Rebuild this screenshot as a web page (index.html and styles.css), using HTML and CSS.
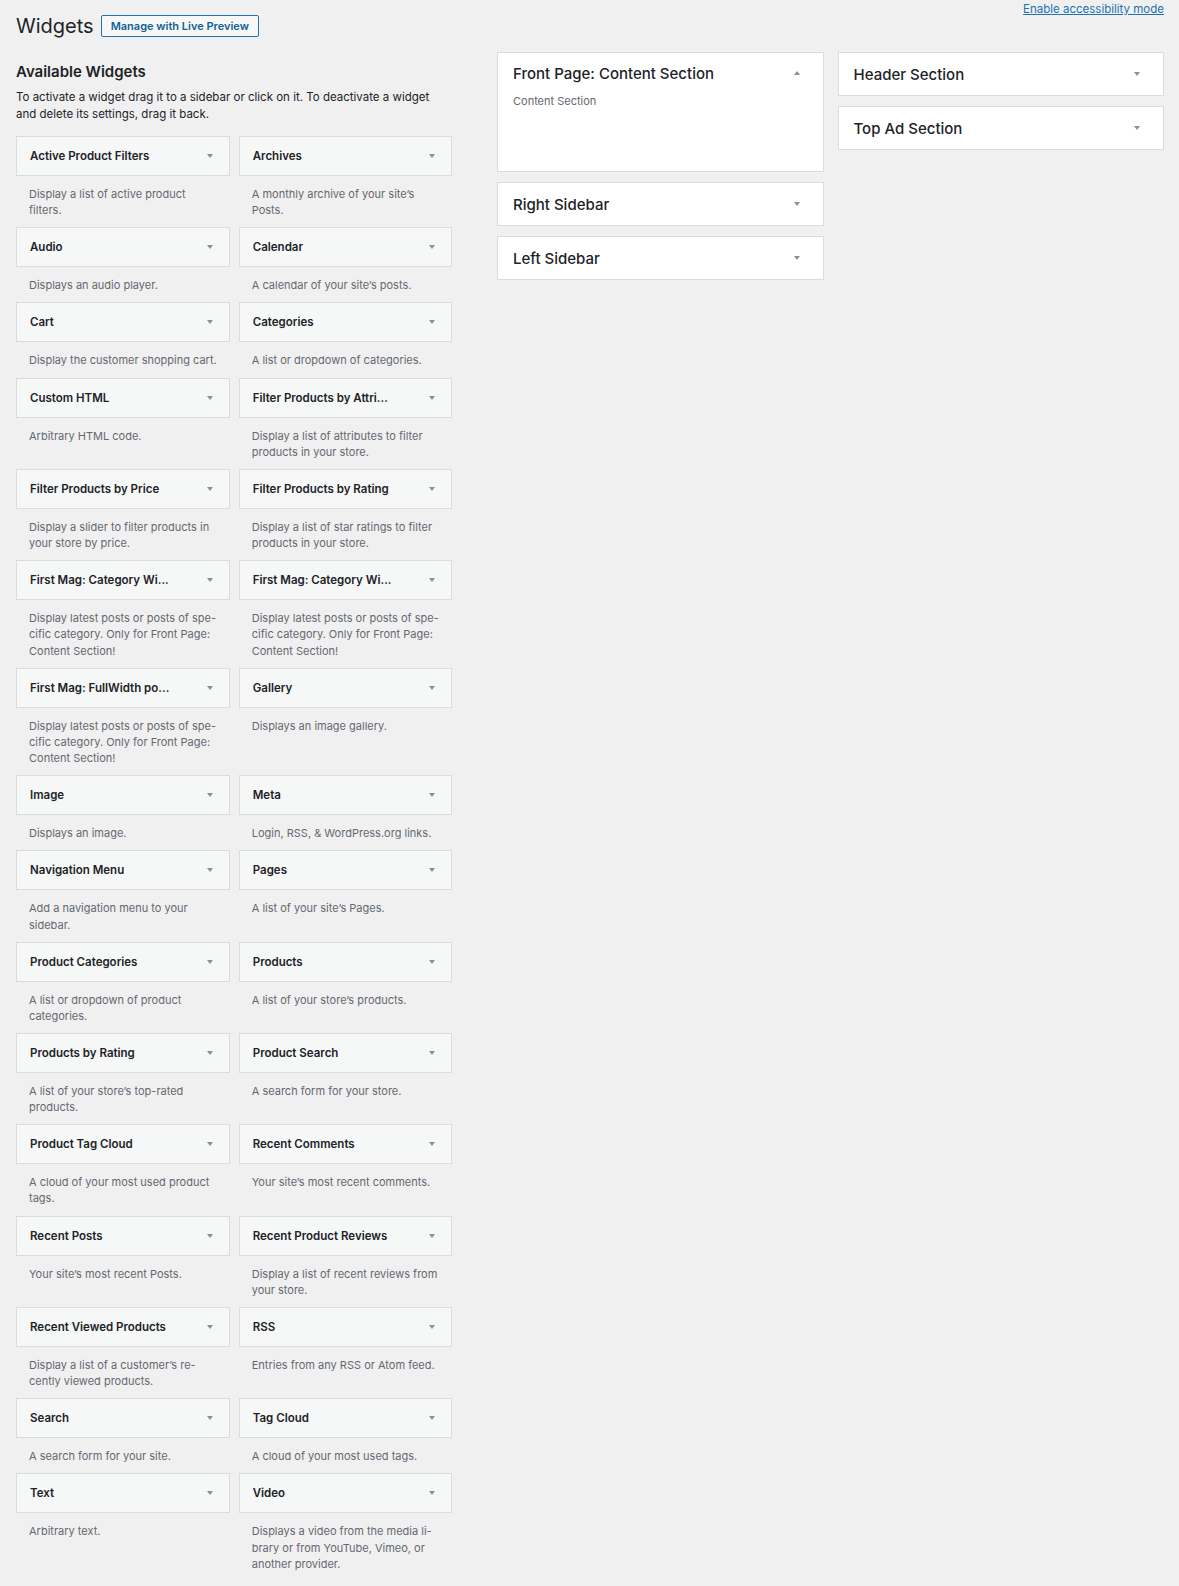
FILE: index.html
```html
<!DOCTYPE html>
<html lang="en">
<head>
  <meta charset="UTF-8" />
  <meta name="viewport" content="width=device-width, initial-scale=1" />
  <title>Widgets</title>
  <link rel="stylesheet" href="styles.css">
</head>
<body>
<div class="wrap">

  <div class="page-head">
    <div class="title-group">
      <h1>Widgets</h1>
      <a class="page-title-action" href="#">Manage with Live Preview</a>
    </div>
    <a class="a11y-link" href="#">Enable accessibility mode</a>
  </div>

  <div class="widgets-page">

    <div class="widgets-left">
      <h2>Available Widgets</h2>
      <p class="intro">To activate a widget drag it to a sidebar or click on it. To deactivate a widget<br>and delete its settings, drag it back.</p>

      <div class="widget-list">
        <div class="widget">
          <div class="widget-top"><span>Active Product Filters</span><i class="arrow"></i></div>
          <p class="widget-description">Display a list of active product<br>filters.</p>
        </div>
        <div class="widget">
          <div class="widget-top"><span>Archives</span><i class="arrow"></i></div>
          <p class="widget-description">A monthly archive of your site’s<br>Posts.</p>
        </div>

        <div class="widget">
          <div class="widget-top"><span>Audio</span><i class="arrow"></i></div>
          <p class="widget-description">Displays an audio player.</p>
        </div>
        <div class="widget">
          <div class="widget-top"><span>Calendar</span><i class="arrow"></i></div>
          <p class="widget-description">A calendar of your site’s posts.</p>
        </div>

        <div class="widget">
          <div class="widget-top"><span>Cart</span><i class="arrow"></i></div>
          <p class="widget-description">Display the customer shopping cart.</p>
        </div>
        <div class="widget">
          <div class="widget-top"><span>Categories</span><i class="arrow"></i></div>
          <p class="widget-description">A list or dropdown of categories.</p>
        </div>

        <div class="widget">
          <div class="widget-top"><span>Custom HTML</span><i class="arrow"></i></div>
          <p class="widget-description">Arbitrary HTML code.</p>
        </div>
        <div class="widget">
          <div class="widget-top"><span>Filter Products by Attri...</span><i class="arrow"></i></div>
          <p class="widget-description">Display a list of attributes to filter<br>products in your store.</p>
        </div>

        <div class="widget">
          <div class="widget-top"><span>Filter Products by Price</span><i class="arrow"></i></div>
          <p class="widget-description">Display a slider to filter products in<br>your store by price.</p>
        </div>
        <div class="widget">
          <div class="widget-top"><span>Filter Products by Rating</span><i class="arrow"></i></div>
          <p class="widget-description">Display a list of star ratings to filter<br>products in your store.</p>
        </div>

        <div class="widget">
          <div class="widget-top"><span>First Mag: Category Wi...</span><i class="arrow"></i></div>
          <p class="widget-description">Display latest posts or posts of spe-<br>cific category. Only for Front Page:<br>Content Section!</p>
        </div>
        <div class="widget">
          <div class="widget-top"><span>First Mag: Category Wi...</span><i class="arrow"></i></div>
          <p class="widget-description">Display latest posts or posts of spe-<br>cific category. Only for Front Page:<br>Content Section!</p>
        </div>

        <div class="widget">
          <div class="widget-top"><span>First Mag: FullWidth po...</span><i class="arrow"></i></div>
          <p class="widget-description">Display latest posts or posts of spe-<br>cific category. Only for Front Page:<br>Content Section!</p>
        </div>
        <div class="widget">
          <div class="widget-top"><span>Gallery</span><i class="arrow"></i></div>
          <p class="widget-description">Displays an image gallery.</p>
        </div>

        <div class="widget">
          <div class="widget-top"><span>Image</span><i class="arrow"></i></div>
          <p class="widget-description">Displays an image.</p>
        </div>
        <div class="widget">
          <div class="widget-top"><span>Meta</span><i class="arrow"></i></div>
          <p class="widget-description">Login, RSS, &amp; WordPress.org links.</p>
        </div>

        <div class="widget">
          <div class="widget-top"><span>Navigation Menu</span><i class="arrow"></i></div>
          <p class="widget-description">Add a navigation menu to your<br>sidebar.</p>
        </div>
        <div class="widget">
          <div class="widget-top"><span>Pages</span><i class="arrow"></i></div>
          <p class="widget-description">A list of your site’s Pages.</p>
        </div>

        <div class="widget">
          <div class="widget-top"><span>Product Categories</span><i class="arrow"></i></div>
          <p class="widget-description">A list or dropdown of product<br>categories.</p>
        </div>
        <div class="widget">
          <div class="widget-top"><span>Products</span><i class="arrow"></i></div>
          <p class="widget-description">A list of your store’s products.</p>
        </div>

        <div class="widget">
          <div class="widget-top"><span>Products by Rating</span><i class="arrow"></i></div>
          <p class="widget-description">A list of your store’s top-rated<br>products.</p>
        </div>
        <div class="widget">
          <div class="widget-top"><span>Product Search</span><i class="arrow"></i></div>
          <p class="widget-description">A search form for your store.</p>
        </div>

        <div class="widget">
          <div class="widget-top"><span>Product Tag Cloud</span><i class="arrow"></i></div>
          <p class="widget-description">A cloud of your most used product<br>tags.</p>
        </div>
        <div class="widget">
          <div class="widget-top"><span>Recent Comments</span><i class="arrow"></i></div>
          <p class="widget-description">Your site’s most recent comments.</p>
        </div>

        <div class="widget">
          <div class="widget-top"><span>Recent Posts</span><i class="arrow"></i></div>
          <p class="widget-description">Your site’s most recent Posts.</p>
        </div>
        <div class="widget">
          <div class="widget-top"><span>Recent Product Reviews</span><i class="arrow"></i></div>
          <p class="widget-description">Display a list of recent reviews from<br>your store.</p>
        </div>

        <div class="widget">
          <div class="widget-top"><span>Recent Viewed Products</span><i class="arrow"></i></div>
          <p class="widget-description">Display a list of a customer’s re-<br>cently viewed products.</p>
        </div>
        <div class="widget">
          <div class="widget-top"><span>RSS</span><i class="arrow"></i></div>
          <p class="widget-description">Entries from any RSS or Atom feed.</p>
        </div>

        <div class="widget">
          <div class="widget-top"><span>Search</span><i class="arrow"></i></div>
          <p class="widget-description">A search form for your site.</p>
        </div>
        <div class="widget">
          <div class="widget-top"><span>Tag Cloud</span><i class="arrow"></i></div>
          <p class="widget-description">A cloud of your most used tags.</p>
        </div>

        <div class="widget">
          <div class="widget-top"><span>Text</span><i class="arrow"></i></div>
          <p class="widget-description">Arbitrary text.</p>
        </div>
        <div class="widget">
          <div class="widget-top"><span>Video</span><i class="arrow"></i></div>
          <p class="widget-description">Displays a video from the media li-<br>brary or from YouTube, Vimeo, or<br>another provider.</p>
        </div>
      </div>
    </div>

    <div class="sidebars">
      <div class="sidebar-col">
        <div class="sidebar open">
          <div class="sidebar-name"><h2>Front Page: Content Section</h2><i class="arrow up"></i></div>
          <p class="sidebar-description">Content Section</p>
          <div class="sidebar-drop"></div>
        </div>
        <div class="sidebar">
          <div class="sidebar-name"><h2>Right Sidebar</h2><i class="arrow"></i></div>
        </div>
        <div class="sidebar">
          <div class="sidebar-name"><h2>Left Sidebar</h2><i class="arrow"></i></div>
        </div>
      </div>
      <div class="sidebar-col">
        <div class="sidebar">
          <div class="sidebar-name"><h2>Header Section</h2><i class="arrow"></i></div>
        </div>
        <div class="sidebar">
          <div class="sidebar-name"><h2>Top Ad Section</h2><i class="arrow"></i></div>
        </div>
      </div>
    </div>

  </div>
</div>
</body>
</html>
```

FILE: styles.css
```css
body {
  margin: 0;
  background: #f0f0f1;
  color: #1d2327;
  font-family: Inter, "Noto Sans", sans-serif;
}
.wrap {
  padding: 0 15px 0 16px;
}
.page-head {
  display: flex;
  justify-content: space-between;
  align-items: flex-start;
}
.title-group {
  display: flex;
  align-items: center;
  gap: 7px;
  margin-top: 15px;
  height: 22px;
}
h1 {
  margin: 0;
  font-size: 20px;
  font-weight: 400;
  line-height: 22px;
}
.page-title-action {
  border: 1px solid #2271b1;
  border-radius: 2px;
  background: #f6f7f7;
  color: #135e96;
  font-size: 11px;
  font-weight: 600;
  line-height: 20px;
  padding: 0 9px;
  text-decoration: none;
}
.a11y-link {
  color: #2271b1;
  font-size: 11.5px;
  line-height: 18px;
}
.widgets-page {
  display: flex;
  margin-top: 15px;
}
.widgets-left {
  width: 436px;
  flex: none;
}
.widgets-left h2 {
  margin: 10px 0 0;
  font-size: 15px;
  font-weight: 600;
  line-height: 20px;
}
.intro {
  margin: 7px 0 0;
  font-size: 11.5px;
  line-height: 17px;
}
.widget-list {
  display: grid;
  grid-template-columns: 1fr 1fr;
  column-gap: 9px;
  margin-top: 13px;
}
.widget-top {
  height: 38px;
  border: 1px solid #dcdcde;
  background: #f6f7f7;
  display: flex;
  align-items: center;
  justify-content: space-between;
  padding: 0 16px 0 13px;
  font-size: 11.5px;
  font-weight: 600;
}
.widget-description {
  margin: 0;
  padding: 10px 13px 9px;
  font-size: 11px;
  line-height: 16.15px;
  color: #646970;
  white-space: nowrap;
}
.arrow {
  width: 0;
  height: 0;
  border-left: 3px solid transparent;
  border-right: 3px solid transparent;
  border-top: 4px solid #8c8f94;
}
.arrow.up {
  border-top: 0;
  border-bottom: 4px solid #8c8f94;
}
.sidebars {
  flex: 1;
  margin-left: 45px;
  display: flex;
  gap: 14px;
  align-items: flex-start;
}
.sidebar-col {
  flex: 1;
  display: flex;
  flex-direction: column;
  gap: 10px;
}
.sidebar {
  background: #fff;
  border: 1px solid #dcdcde;
}
.sidebar-name {
  height: 42px;
  display: flex;
  align-items: center;
  justify-content: space-between;
  padding: 0 23px 0 15px;
}
.sidebar.open .sidebar-name {
  height: 40px;
}
.sidebar-name h2 {
  margin: 0;
  font-size: 15px;
  font-weight: 500;
}
.sidebar-description {
  margin: 0;
  padding: 0 15px;
  font-size: 11px;
  line-height: 16px;
  color: #646970;
}
.sidebar-drop {
  height: 62px;
}
```
